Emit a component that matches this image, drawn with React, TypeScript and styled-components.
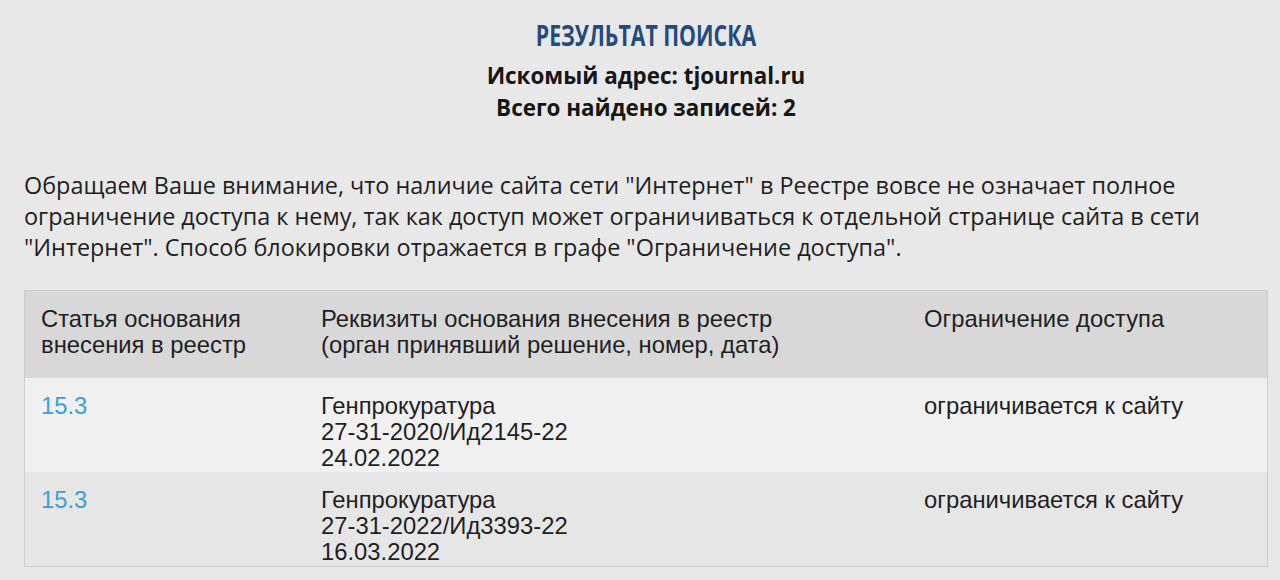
import styled, { createGlobalStyle } from "styled-components";

const GlobalStyles = createGlobalStyle`
  html, body {
    margin: 0;
    background: #e8e8e8;
  }
  body {
    color: #1f1f1f;
  }
`;

const Page = styled.div`
  padding: 16px 12px 0 24px;
`;

const Header = styled.header`
  text-align: center;
`;

const Title = styled.h1`
  margin: 0;
  font-family: "Open Sans", sans-serif;
  font-weight: 700;
  font-size: 28px;
  line-height: 38px;
  color: #234a7d;
`;

// the original heading uses a condensed face, none is installed
const Narrow = styled.span`
  display: inline-block;
  transform: scaleX(0.76);
`;

const Subtitle = styled.div`
  font-family: "Open Sans", sans-serif;
  font-weight: 700;
  font-size: 22.4px;
  line-height: 32px;
  color: #161616;

  &:first-of-type {
    margin-top: 6px;
  }
`;

const Notice = styled.p`
  margin: 46px 0 27px;
  font-family: "Open Sans", sans-serif;
  font-size: 23.4px;
  line-height: 31px;
  color: #1f1f1f;
`;

const Table = styled.table`
  width: 100%;
  border-collapse: collapse;
  border: 1px solid #cdcdcd;
  font-family: "Liberation Sans", Arial, sans-serif;
  font-size: 23.8px;
  line-height: 26px;
  color: #1f1f1f;
`;

const Row = styled.tr<{ $tone: "head" | "light" | "dark" }>`
  background: ${(p) =>
    p.$tone === "head" ? "#d8d8d8" : p.$tone === "light" ? "#f0f0f0" : "#e6e6e6"};
`;

const Th = styled.th<{ $w?: string }>`
  width: ${(p) => p.$w ?? "auto"};
  text-align: left;
  vertical-align: top;
  font-weight: 400;
  padding: 15px 16px 20px;
`;

const Td = styled.td`
  vertical-align: top;
  padding: 15px 16px 1px;
`;

const Link = styled.a`
  color: #3a9fd8;
  text-decoration: none;
`;

const records = [
  { article: "15.3", doc: "27-31-2020/Ид2145-22", date: "24.02.2022" },
  { article: "15.3", doc: "27-31-2022/Ид3393-22", date: "16.03.2022" },
];

const App = () => {
  return (
    <>
      <GlobalStyles />
      <Page>
        <Header>
          <Title>
            <Narrow>РЕЗУЛЬТАТ ПОИСКА</Narrow>
          </Title>
          <Subtitle>Искомый адрес: tjournal.ru</Subtitle>
          <Subtitle>Всего найдено записей: 2</Subtitle>
        </Header>
        <Notice>
          Обращаем Ваше внимание, что наличие сайта сети "Интернет" в Реестре вовсе не означает полное
          <br />
          ограничение доступа к нему, так как доступ может ограничиваться к отдельной странице сайта в сети
          <br />
          "Интернет". Способ блокировки отражается в графе "Ограничение доступа".
        </Notice>
        <Table>
          <thead>
            <Row $tone="head">
              <Th $w="248px">
                Статья основания
                <br />
                внесения в реестр
              </Th>
              <Th $w="571px">
                Реквизиты основания внесения в реестр
                <br />
                (орган принявший решение, номер, дата)
              </Th>
              <Th>Ограничение доступа</Th>
            </Row>
          </thead>
          <tbody>
            {records.map((r, i) => (
              <Row key={i} $tone={i % 2 === 0 ? "light" : "dark"}>
                <Td>
                  <Link href="#">{r.article}</Link>
                </Td>
                <Td>
                  Генпрокуратура
                  <br />
                  {r.doc}
                  <br />
                  {r.date}
                </Td>
                <Td>ограничивается к сайту</Td>
              </Row>
            ))}
          </tbody>
        </Table>
      </Page>
    </>
  );
};

export default App;
